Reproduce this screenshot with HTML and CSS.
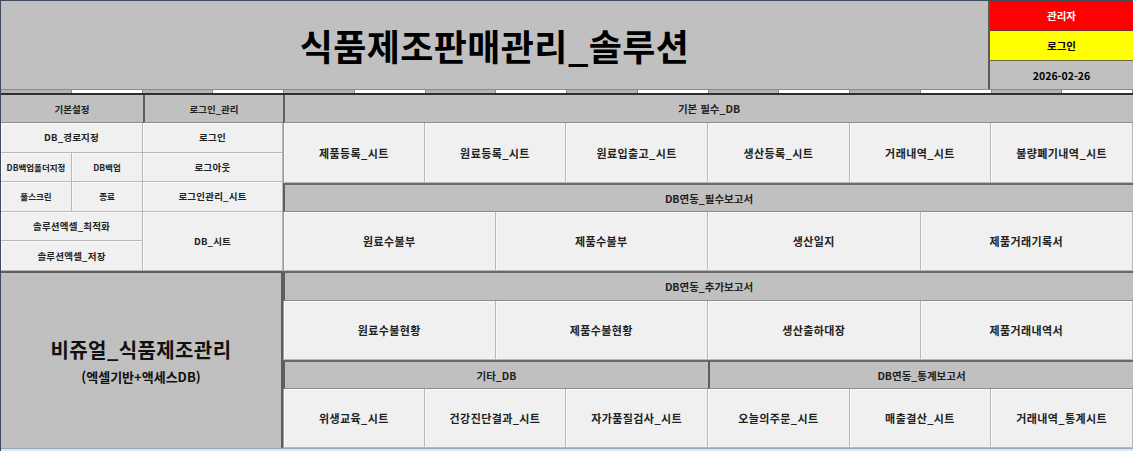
FILE: index.html
```html
<!DOCTYPE html>
<html lang="ko">
<head>
  <meta charset="UTF-8">
  <meta name="viewport" content="width=device-width, initial-scale=1.0">
  <title>식품제조판매관리_솔루션</title>
  <link rel="stylesheet" href="styles.css">
</head>
<body>
  <div class="sheet">
    <header class="top">
      <div class="title">식품제조판매관리_솔루션</div>
      <div class="status">
        <div class="badge admin">관리자</div>
        <div class="badge login">로그인</div>
        <div class="badge date">2026-02-26</div>
      </div>
    </header>

    <div class="strip">
      <span></span><span></span><span></span><span></span>
      <span></span><span></span><span></span><span></span>
      <span></span><span></span><span></span><span></span>
      <span></span><span></span><span></span><span></span>
    </div>

    <main class="board">
      <section class="side">
        <div class="menu">
          <div class="head wide">기본설정</div>
          <div class="head">로그인_관리</div>

          <div class="btn sm wide">DB_경로지정</div>
          <div class="btn sm">로그인</div>

          <div class="btn xs">DB백업폴더지정</div>
          <div class="btn xs">DB백업</div>
          <div class="btn sm">로그아웃</div>

          <div class="btn xs">풀스크린</div>
          <div class="btn xs">종료</div>
          <div class="btn sm">로그인관리_시트</div>

          <div class="btn sm wide">솔루션엑셀_최적화</div>
          <div class="btn sm tall">DB_시트</div>
          <div class="btn sm wide">솔루션엑셀_저장</div>
        </div>

        <div class="brand">
          <div class="brand-name">비쥬얼_식품제조관리</div>
          <div class="brand-sub">(엑셀기반+액세스DB)</div>
        </div>
      </section>

      <section class="panel">
        <div class="head">기본 필수_DB</div>
        <div class="row six">
          <div class="btn">제품등록_시트</div>
          <div class="btn">원료등록_시트</div>
          <div class="btn">원료입출고_시트</div>
          <div class="btn">생산등록_시트</div>
          <div class="btn">거래내역_시트</div>
          <div class="btn">불량폐기내역_시트</div>
        </div>

        <div class="head">DB연동_필수보고서</div>
        <div class="row four">
          <div class="btn">원료수불부</div>
          <div class="btn">제품수불부</div>
          <div class="btn">생산일지</div>
          <div class="btn">제품거래기록서</div>
        </div>

        <div class="head">DB연동_추가보고서</div>
        <div class="row four">
          <div class="btn">원료수불현황</div>
          <div class="btn">제품수불현황</div>
          <div class="btn">생산출하대장</div>
          <div class="btn">제품거래내역서</div>
        </div>

        <div class="row two">
          <div class="head">기타_DB</div>
          <div class="head">DB연동_통계보고서</div>
        </div>
        <div class="row six">
          <div class="btn">위생교육_시트</div>
          <div class="btn">건강진단결과_시트</div>
          <div class="btn">자가품질검사_시트</div>
          <div class="btn">오늘의주문_시트</div>
          <div class="btn">매출결산_시트</div>
          <div class="btn">거래내역_통계시트</div>
        </div>
      </section>
    </main>
    <div class="foot"></div>
  </div>
</body>
</html>
```

FILE: styles.css
```css
* {
  box-sizing: border-box;
}

body {
  margin: 0;
  background: #dfe6ee;
  font-family: "Noto Sans CJK KR", "Noto Sans", sans-serif;
  font-weight: 700;
  color: #1a1a1a;
}

.sheet {
  width: 1133px;
  height: 451px;
  display: flex;
  flex-direction: column;
  border-top: 1px solid #3e4a5a;
  border-left: 1px solid #3e4a5a;
  overflow: hidden;
}

/* ---- title bar ---- */
.top {
  display: flex;
  height: 88px;
}

.title {
  flex: 1;
  display: flex;
  align-items: center;
  justify-content: center;
  background: #c0c0c0;
  border-right: 2px solid #5a5a5a;
  font-size: 36px;
  letter-spacing: 0.4px;
  color: #000;
}

.status {
  width: 143px;
  display: grid;
  grid-template-rows: 30px 30px 1fr;
}

.badge {
  display: flex;
  align-items: center;
  justify-content: center;
  font-size: 10.5px;
}

.admin {
  background: #ff0000;
  color: #fff;
  border-bottom: 1px solid #7a3030;
}

.login {
  background: #ffff00;
  color: #000;
  border-bottom: 1px solid #6c6c40;
}

.date {
  background: #c0c0c0;
  color: #000;
}

/* ---- cell strip under the title ---- */
.strip {
  display: grid;
  grid-template-columns: repeat(16, 1fr);
  height: 6px;
  border-top: 1px solid #8a8a8a;
  border-bottom: 2px solid #2e2e2e;
}

.strip span {
  border-right: 1px solid #8a8a8a;
  background: #b4b4b4;
}

.strip span:nth-child(even) {
  background: #fff;
}

/* ---- board ---- */
.board {
  display: grid;
  grid-template-columns: 282px 1fr;
  height: 353px;
}

.side {
  display: grid;
  grid-template-rows: 176px 1fr;
}

.menu {
  display: grid;
  grid-template-columns: 71px 71px 1fr;
  grid-template-rows: 28px repeat(5, 1fr);
}

.menu .wide {
  grid-column: span 2;
}

.menu .tall {
  grid-row: span 2;
}

.head {
  display: flex;
  align-items: center;
  justify-content: center;
  background: #c0c0c0;
  border-left: 2px solid #5e5e5e;
  border-bottom: 1px solid #8c8c8c;
  font-size: 10.5px;
  color: #222;
}

.menu .head {
  font-size: 9.5px;
}

.menu .head:first-child {
  border-left: 0;
}

.btn {
  display: flex;
  align-items: center;
  justify-content: center;
  background: #f0f0f0;
  border-right: 1px solid #b8b8b8;
  border-bottom: 1px solid #b8b8b8;
  box-shadow: inset 1px 1px 0 #fafafa;
  font-size: 11px;
  letter-spacing: 0.4px;
  color: #222;
  cursor: pointer;
}

.btn.sm {
  font-size: 9.5px;
  letter-spacing: 0.2px;
}

.btn.xs {
  font-size: 8.5px;
  letter-spacing: 0;
}

.brand {
  display: flex;
  flex-direction: column;
  align-items: center;
  justify-content: center;
  gap: 3px;
  background: #c0c0c0;
  border-top: 2px solid #5e5e5e;
  border-right: 2px solid #5e5e5e;
  color: #111;
}

.brand-name {
  font-size: 20px;
  letter-spacing: 0.4px;
}

.brand-sub {
  font-size: 13px;
}

.panel {
  display: grid;
  grid-template-rows: 28px 60px 29px 59px 30px 59px 29px 59px;
}

.panel > .head {
  border-top: 2px solid #6a6a6a;
}

.panel > .head:first-child {
  border-top: 0;
}

.row {
  display: grid;
}

.row.six {
  grid-template-columns: repeat(6, 1fr);
}

.row.four {
  grid-template-columns: repeat(4, 1fr);
}

.row.two {
  grid-template-columns: 1fr 1fr;
}

.row.two .head {
  border-top: 2px solid #6a6a6a;
}

.row .btn:first-child {
  border-left: 1px solid #9a9a9a;
}

.foot {
  flex: 1;
  background: #dfe6ee;
  border-top: 1px solid #9aa8b8;
}
```
